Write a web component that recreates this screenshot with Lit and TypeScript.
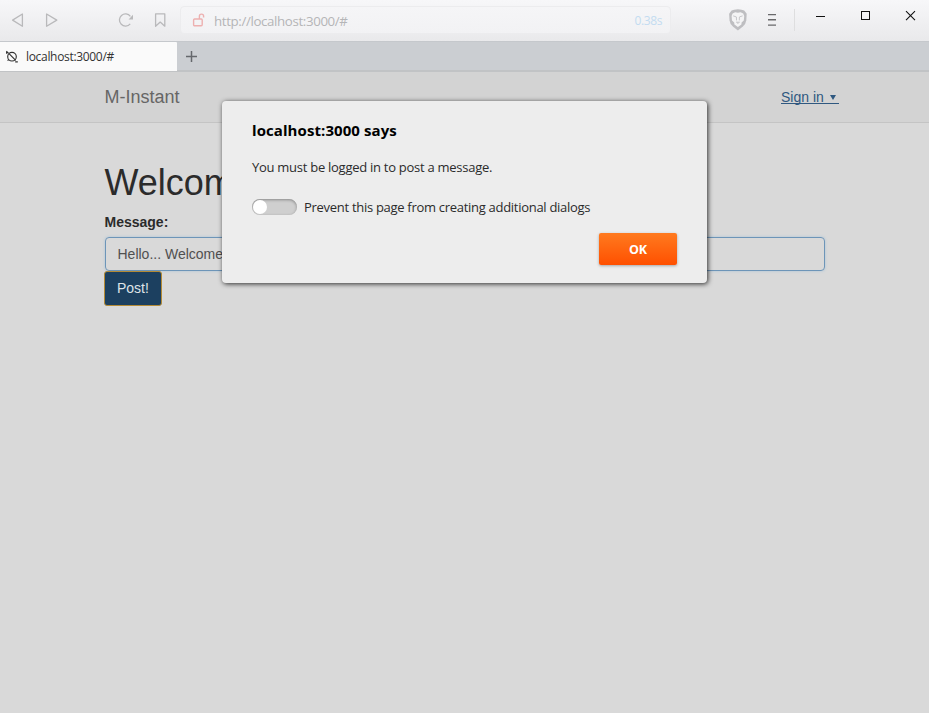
import { LitElement, html, css } from "lit";
import { customElement } from "lit/decorators.js";

@customElement("browser-toolbar")
class BrowserToolbar extends LitElement {
  static styles = css`
    :host { display: flex; height: 41px; flex: none; background: linear-gradient(#f7f7f9, #e9e9eb); }
    svg { display: block; flex: none; fill: none; }
    .left { width: 180px; flex: none; }
    .url { box-sizing: border-box; width: 491px; height: 28px; margin-top: 6px; flex: none; display: flex; align-items: center;
      border: 1px solid #ececee; border-radius: 4px; background: linear-gradient(#f5f5f7, #f2f2f4); padding: 0 8px 0 10px; }
    .address { font: 13.3px/20px "Open Sans", "Noto Sans", sans-serif; color: #b5b5b7; margin-left: 9px; flex: 1; white-space: nowrap; letter-spacing: -0.37px; padding-top: 2px; }
    .time { font: 12px/20px "Open Sans", "Noto Sans", sans-serif; color: #c3dcf1; letter-spacing: -0.4px; padding-top: 2px; }
  `;
  render() {
    return html`
      <svg class="left" width="180" height="41" stroke="#b9b9bb" stroke-width="1.3" stroke-linejoin="round">
        <path d="M22.4 14v12.3L12.6 20.1Z" />
        <path d="M46.6 14v12.3L56.8 20.1Z" />
        <path d="M130.2 23.9A6.1 6.1 0 1 1 130.4 16.3" />
        <path d="M133 14.8v4.8h-4.4Z" fill="#b9b9bb" stroke="none" />
        <path d="M155.6 13.8h9.2v12.4l-4.6-4.1-4.6 4.1Z" />
      </svg>
      <div class="url">
        <svg width="14" height="16" stroke="#edb0b0" stroke-width="1.4">
          <rect x="2.6" y="7" width="8.6" height="6.8" rx="1" />
          <path d="M8.4 7V4.2a2 2 0 0 1 4.2 0v1.2" />
        </svg>
        <span class="address">http://localhost:3000/#</span>
        <span class="time">0.38s</span>
      </div>
      <svg width="258" height="41" viewBox="671 0 258 41">
        <path d="M731.6 10.6l2.6-.9q3.7-1 7.4 0l2.6.9 2.5 3.2-.4 6.4q-.5 4-3.4 6.4l-5 4-5-4q-2.9-2.4-3.4-6.4l-.4-6.4Z" fill="#bebec1" />
        <path d="M732.6 13.4l2.6-1.2 2.7.6 2.7-.6 2.6 1.2 1 2.7-.4 4.5-2.2 1.8-.2 2.2-3.5 2.3-3.5-2.3-.2-2.2-2.2-1.8-.4-4.5Z" fill="#f4f4f5" />
        <path d="M733.2 15.9l3.2 1M742.6 15.9l-3.2 1M736.4 17l.1 3.4M739.4 17l-.1 3.4M736 22.2h3.8M737.9 22.2v1.8" stroke="#c2c2c5" stroke-width=".9" />
        <path d="M768 14.6h8M768 19.8h8M768 25.1h8" stroke="#69696b" stroke-width="1.4" />
        <path d="M794.5 9v22" stroke="#dededf" />
        <path d="M816 16.5h9" stroke="#111" />
        <rect x="861.5" y="11.5" width="8" height="8" stroke="#111" />
        <path d="M906 11.2l9 9M915 11.2l-9 9" stroke="#111" stroke-width="1.1" />
      </svg>`;
  }
}

@customElement("tab-strip")
class TabStrip extends LitElement {
  static styles = css`
    :host { box-sizing: border-box; display: flex; height: 31px; flex: none; background: #cbced2; border-top: 1px solid #c5c8cc; border-bottom: 2px solid #c1c3c5; }
    .tab { box-sizing: border-box; width: 177px; height: 29px; margin-bottom: -1px; background: #fafafa; display: flex; align-items: center; padding-left: 5px; border-radius: 0 1px 0 0; }
    .title { font: 12px/20px "Open Sans", "Noto Sans", sans-serif; color: #333; margin: 1px 0 0 7px; white-space: nowrap; letter-spacing: -0.32px; }
    svg { display: block; fill: none; flex: none; }
    .icon { margin-top: 1px; }
    .plus { margin: 8px 0 0 8px; }
  `;
  render() {
    return html`
      <div class="tab">
        <svg class="icon" width="14" height="14" stroke="#333" stroke-width="1.15">
          <circle cx="7" cy="6.7" r="4.3" />
          <path d="M1.3 1.2l2.2 2M4 3.6l6.7 6.8M10.2 11.8h2.6M1.6 3.8V1.4M2.6 10.6l1.2-1.2" />
        </svg>
        <span class="title">localhost:3000/#</span>
      </div>
      <svg class="plus" width="13" height="13" stroke="#65686c" stroke-width="1.5"><path d="M1 6.5h11M6.5 1v11" /></svg>`;
  }
}

@customElement("alert-dialog")
class AlertDialog extends LitElement {
  static styles = css`
    :host { box-sizing: border-box; display: flex; flex-direction: column; width: 485px; height: 182px; padding: 19px 30px 18px; border-radius: 4px;
      background: #ededed; box-shadow: 1px 1px 5px rgba(0,0,0,.8); font: 13px/20px "Open Sans", "Noto Sans", sans-serif; color: #2b2b2b; white-space: nowrap; }
    .heading { font-size: 15px; font-weight: 700; color: #000; letter-spacing: 0.08px; }
    .message { margin-top: 17px; letter-spacing: -0.27px; }
    .option { display: flex; align-items: center; margin-top: 20px; }
    .switch { box-sizing: border-box; width: 45px; height: 16px; border-radius: 8px; background: #cfcfcf; box-shadow: inset 0 1px 3px #888; padding: 1px; }
    .knob { width: 14px; height: 14px; border-radius: 50%; background: #fff; }
    .caption { margin-left: 7px; letter-spacing: -0.29px; }
    .ok { align-self: flex-end; margin-top: 16px; width: 78px; height: 32px; border: 0; padding: 1px 0 0; border-radius: 2px; background: linear-gradient(#ff7a1f, #ff5000);
      color: #fff; font: 700 12.5px/31px "Open Sans", "Noto Sans", sans-serif; box-shadow: 0 1px 3px rgba(0,0,0,.3); letter-spacing: -.2px; }
  `;
  render() {
    return html`
      <div class="heading"><span>localhost:3000 says</span></div>
      <div class="message"><span>You must be logged in to post a message.</span></div>
      <div class="option"><div class="switch"><div class="knob"></div></div><span class="caption">Prevent this page from creating additional dialogs</span></div>
      <button class="ok">OK</button>`;
  }
}

@customElement("app-root")
class AppRoot extends LitElement {
  static styles = css`
    :host { display: flex; flex-direction: column; height: 713px; position: relative; overflow: hidden; background: #d9d9d9;
      font: 14px/20px "Liberation Sans", Arial, sans-serif; color: #2b2b2b; }
    .nav { box-sizing: border-box; height: 51px; flex: none; background: #d3d3d3; border-bottom: 1px solid #c4c4c4; display: flex; align-items: center; justify-content: space-between; padding: 0 90px 0 104.5px; }
    .brand { font-size: 18px; color: #666; }
    .signin { box-sizing: border-box; color: #2f5880; white-space: pre; display: flex; align-items: center; width: 58px; height: 13px; line-height: 12px; border-bottom: 1px solid #2f5880; margin-top: 1px; }
    .caret { width: 0; height: 0; border: 3px solid transparent; border-top: 5px solid #2f5880; border-bottom: 0; margin-left: 2px; }
    .page { padding: 40px 104px 0 104.5px; display: flex; flex-direction: column; align-items: flex-start; }
    h1 { margin: 0 0 9.4px; font-size: 36px; font-weight: 500; line-height: 39.6px; }
    .label { font-weight: 700; margin-bottom: 5px; }
    .field { box-sizing: border-box; width: 100%; height: 34px; border: 1px solid #6d95b8; border-radius: 4px; padding: 6px 12px; color: #505050; box-shadow: 0 0 3px #a9c4d8; }
    .post { box-sizing: border-box; width: 58px; height: 35px; margin-left: -0.5px; border: 1px solid #b58b35; border-radius: 3px; padding: 0 11px 1px 12px; background: #1c4060; color: #dfe3e7; font: inherit; text-align: left; }
    alert-dialog { position: absolute; left: 222px; top: 101px; }
  `;
  render() {
    return html`
      <browser-toolbar></browser-toolbar>
      <tab-strip></tab-strip>
      <div class="nav"><span class="brand">M-Instant</span><a class="signin"><span>Sign in </span><span class="caret"></span></a></div>
      <div class="page">
        <h1>Welcome</h1>
        <span class="label">Message:</span>
        <div class="field">Hello... Welcome</div>
        <button class="post">Post!</button>
      </div>
      <alert-dialog></alert-dialog>`;
  }
}
